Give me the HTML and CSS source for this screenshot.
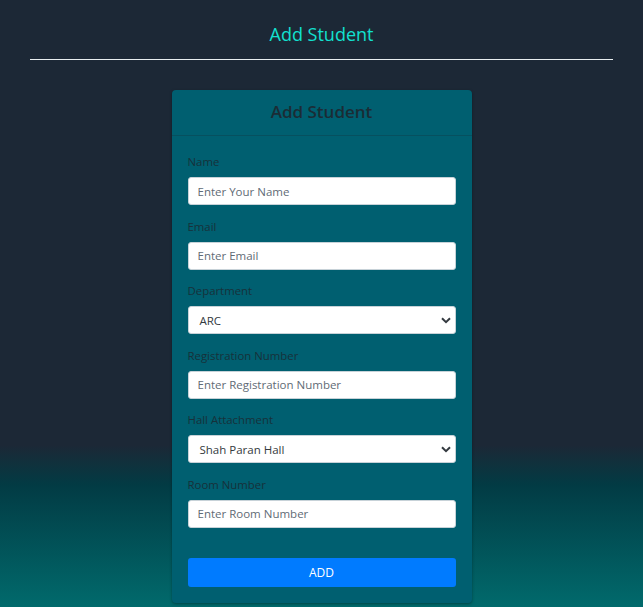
FILE: index.html
```html
<!DOCTYPE html>
<html>
<head>
<meta charset="utf-8">
<link rel="stylesheet" href="styles.css">
</head>
<body>
<header class="top">
  <h1 class="title">Add Student</h1>
  <hr class="rule">
</header>
<main class="wrap">
  <div class="card">
    <div class="card-header">Add Student</div>
    <form class="card-body">
      <div class="group">
        <label class="lbl">Name</label>
        <input class="ctl" type="text" placeholder="Enter Your Name">
      </div>
      <div class="group">
        <label class="lbl">Email</label>
        <input class="ctl" type="text" placeholder="Enter Email">
      </div>
      <div class="group">
        <label class="lbl">Department</label>
        <div class="ctl sel"><span>ARC</span><svg width="10" height="7" viewBox="0 0 10 7"><path d="M1 1.2 L5 5.2 L9 1.2" fill="none" stroke="#343a40" stroke-width="2"/></svg></div>
      </div>
      <div class="group">
        <label class="lbl">Registration Number</label>
        <input class="ctl" type="text" placeholder="Enter Registration Number">
      </div>
      <div class="group">
        <label class="lbl">Hall Attachment</label>
        <div class="ctl sel"><span>Shah Paran Hall</span><svg width="10" height="7" viewBox="0 0 10 7"><path d="M1 1.2 L5 5.2 L9 1.2" fill="none" stroke="#343a40" stroke-width="2"/></svg></div>
      </div>
      <div class="group">
        <label class="lbl">Room Number</label>
        <input class="ctl" type="text" placeholder="Enter Room Number">
      </div>
      <button class="btn" type="button">ADD</button>
    </form>
  </div>
</main>
</body>
</html>
```
FILE: styles.css
```css
* { box-sizing: border-box; }
html, body { margin: 0; height: 100%; }
body {
  font-family: "Open Sans", "Noto Sans", sans-serif;
  background: linear-gradient(to bottom, #1c2836 0px, #1c2836 445px, #023b44 485px, #016a6c 607px);
  overflow: hidden;
}
.top { padding: 22px 30px 0; }
.title {
  margin: 0;
  text-align: center;
  font-size: 18px;
  font-weight: 400;
  color: #12e0d0;
  line-height: 24px;
}
.rule {
  margin: 13px 0 0;
  border: 0;
  border-top: 1px solid #e8eef0;
}
.wrap { display: flex; justify-content: center; padding-top: 30px; }
.card {
  width: 300px;
  background: #005f70;
  border-radius: 4px;
  box-shadow: 0 1px 3px rgba(0,0,0,0.35);
}
.card-header {
  height: 46px;
  display: flex;
  align-items: center;
  justify-content: center;
  padding-bottom: 2px;
  font-size: 17px;
  font-weight: 600;
  color: #1b2c35;
  border-bottom: 1px solid #06505f;
}
.card-body { padding: 17px 16px 16px; display: flex; flex-direction: column; }
.group { display: flex; flex-direction: column; margin-bottom: 12.5px; }
.lbl {
  font-size: 11.4px;
  line-height: 18px;
  color: #17313a;
  margin-bottom: 6px;
}
.ctl {
  height: 28px;
  width: 100%;
  border: 1px solid #c7d2d8;
  border-radius: 3px;
  background: #fff;
  font-family: inherit;
  font-size: 11.5px;
  padding: 0 9px;
  color: #343a40;
  outline: none;
}
.ctl::placeholder { color: #5f6b75; }
.sel { display: flex; align-items: center; justify-content: space-between; padding: 0 4px 0 11px; }
.btn {
  margin-top: 17.5px;
  height: 29px;
  border: 0;
  border-radius: 3px;
  background: #007bff;
  color: #fff;
  font-family: inherit;
  font-size: 12px;
}
```
